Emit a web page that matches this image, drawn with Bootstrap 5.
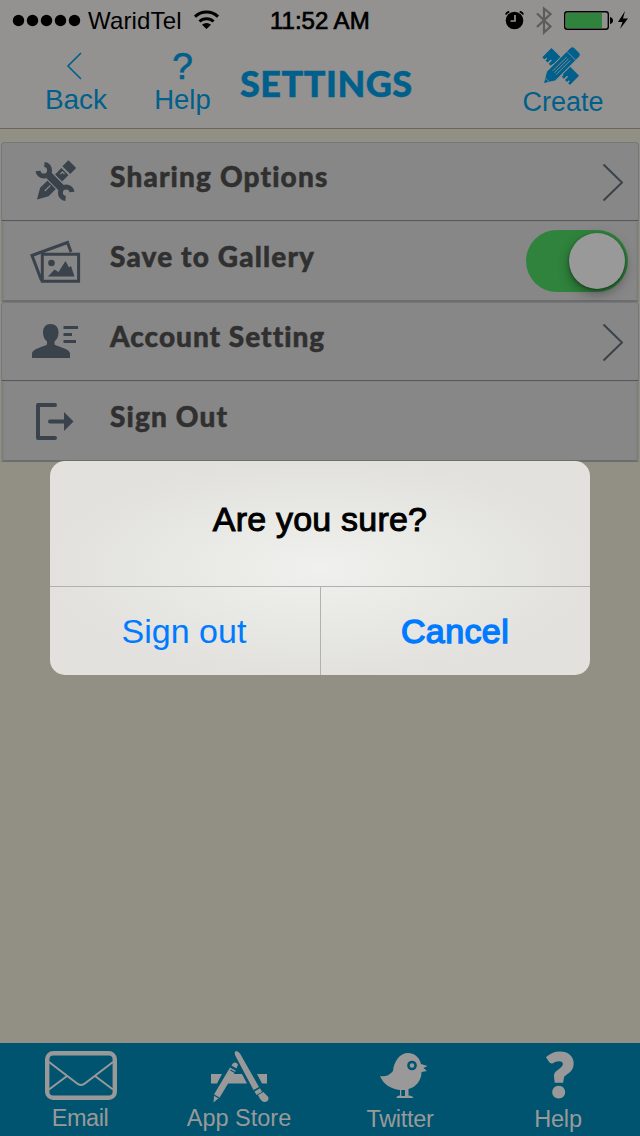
<!DOCTYPE html>
<html lang="en">
<head>
<meta charset="utf-8">
<meta name="viewport" content="width=device-width, initial-scale=1">
<title>Settings</title>
<link rel="stylesheet" href="https://cdn.jsdelivr.net/npm/bootstrap@5.3.0/dist/css/bootstrap.min.css">
<style>
  body { width: 640px; height: 1136px; background: #929084; font-family: "Liberation Sans", sans-serif; overflow: hidden; }
  svg { display: block; flex: none; }
  .app-top { height: 129px; background: #949290; border-bottom: 1px solid #6b665d; }
  .status-bar { height: 40px; color: #000; font-size: 24px; line-height: 40px; padding-left: 12px; }
  .carrier { width: 93px; margin-left: 7px; letter-spacing: .15px; white-space: nowrap; padding-top: 1px; }
  .clock { width: 100px; margin-left: 50px; letter-spacing: 0; -webkit-text-stroke: .7px #000; white-space: nowrap; padding-top: 1px; }
  .title-row { height: 88px; color: #005f8b; padding-left: 40px; }
  .nav-btn { color: inherit; text-decoration: none; font-size: 28px; line-height: 32px; white-space: nowrap; }
  .glyph-box { height: 44px; }
  .help-mark { font-size: 37px; line-height: 43px; padding-top: 5px; -webkit-text-stroke: .7px; }
  .title-text { width: 180px; margin: 0 0 0 25px; font: 900 36px/44px Lato, sans-serif; white-space: nowrap; padding-top: 21px; letter-spacing: .5px; -webkit-text-stroke: .5px; }
  .settings { margin: 13px 1px 0; }
  .settings .list-group-item { height: 79px; background: #878787; border: 1px solid #76777a; border-bottom-color: #585858; padding: 0 0 0 28px; color: #303030; border-radius: 0; }
  .settings .list-group-item.top-item { border-radius: 4px 4px 0 0; }
  .settings .list-group-item.end-item { height: 81px; border-width: 1px 3px 2px; border-color: #838383 #80807c #6d6d6d; padding-left: 26px; padding-right: 0; }
  .settings svg { color: #3a424b; }
  .row-label { font: 900 28px/40px Lato, sans-serif; letter-spacing: 1.15px; -webkit-text-stroke: .5px; margin-left: 28px; padding-bottom: 11px; white-space: nowrap; }
  .toggle { width: 102px; height: 62px; border-radius: 31px; background: #2f833c; padding: 3px; margin-right: 8px; }
  .knob { width: 56px; height: 56px; border-radius: 50%; background: #999; box-shadow: 0 5px 12px rgba(0,0,0,.35), 0 1px 3px rgba(0,0,0,.4); }
  .alert-box { left: 50px; top: 461px; width: 540px; height: 214px; border-radius: 15px; background: radial-gradient(ellipse 270px 107px at 50% 50%, #f0f0ee, #e7e7e3 60%, #e2e1de); color: #000; z-index: 5; overflow: hidden; }
  .alert-title { height: 125px; font-size: 34px; line-height: 117px; letter-spacing: .2px; -webkit-text-stroke: 1px #000; }
  .alert-actions { height: 89px; border-top: 1px solid #b2b1af; }
  .alert-btn { color: #007aff; background: transparent; border: 0; font-size: 34px; line-height: 88px; padding: 0; }
  .alert-btn:first-child { padding-right: 2px; }
  .alert-btn + .alert-btn { border-left: 1px solid #b2b1af; letter-spacing: .4px; padding-right: 1px; -webkit-text-stroke: 1.4px #007aff; }
  .tab-bar { height: 93px; background: #005470; color: #999; }
  .tab-link { color: #999; text-decoration: none; font-size: 23.5px; line-height: 28px; white-space: nowrap; }
  .tab-link .art { height: 61px; }
  .big-mark { font: 900 61px/61px Lato, sans-serif; padding-left: 4px; -webkit-text-stroke: 3px #999; }
</style>
</head>
<body class="d-flex flex-column position-relative">
<header class="app-top">
  <div class="status-bar d-flex align-items-center">
    <svg width="69" height="40"><g><circle cx="6.500" cy="20.500" r="5.700"/><circle cx="20.500" cy="20.500" r="5.700"/><circle cx="34.500" cy="20.500" r="5.700"/><circle cx="48.500" cy="20.500" r="5.700"/><circle cx="62.500" cy="20.500" r="5.700"/></g></svg>
    <span class="carrier">WaridTel</span>
    <svg width="26" height="40" viewBox="194 0 26 40" style="margin-left:13px"><g fill="none" stroke="#000" stroke-width="3"><path d="M195 16.700a16.500 16.500 0 0 1 23 0M199.500 21.500a10 10 0 0 1 14 0"/></g><path d="M202 24.700a6.600 6.600 0 0 1 9 0L206.500 29z"/></svg>
    <span class="clock">11:52 AM</span>
    <svg width="140" height="40" viewBox="500 0 140 40" class="ms-auto">
      <circle cx="514.500" cy="20.500" r="8.800"/><path d="M505.800 14.500q.7-2 3.500-2.800M519.700 11.700q2.800.8 3.500 2.800" fill="none" stroke="#000" stroke-width="1.800"/><path d="M515 15v6h-4.500" fill="none" stroke="#949290" stroke-width="1.700"/>
      <path d="M537 13.500l13.500 13-6.500 6V8.500l6.500 5.500L537 27" fill="none" stroke="#5d5c5a" stroke-width="2.200"/>
      <rect x="564.700" y="11.700" width="43.600" height="17.600" rx="2.500" fill="none" stroke="#000" stroke-width="1.400"/><path d="M566 13h36v15h-36z" fill="#2f833c"/><path d="M610 17q3 1 3 3.500t-3 3.500z"/>
      <path d="M625 11l-7 11h4.500l-2.500 7 8-10.500h-5z"/>
    </svg>
  </div>
  <nav class="title-row d-flex">
    <a href="#" class="nav-btn text-center" style="width:72px"><div class="glyph-box"><svg width="72" height="43" viewBox="40 40 72 43"><path d="M81 53L68 66l13 13" fill="none" stroke="#005f8b" stroke-width="1.600"/></svg></div>Back</a>
    <a href="#" class="nav-btn text-center" style="width:65px;margin-left:38px;font-size:27.500px"><div class="glyph-box help-mark">?</div>Help</a>
    <h1 class="title-text">SETTINGS</h1>
    <a href="#" class="nav-btn text-center" style="width:92px;margin-left:97px;font-size:27px"><div class="glyph-box" style="height:46px"><svg width="92" height="45" viewBox="517 40 92 45">
      <g transform="translate(560.700 66.500)" fill="#005f8b">
        <path transform="rotate(45)" d="M-19.500-6.500h39v13h-2.500V4h-1.500v2.500h-3V2h-1.500v4.500h-3V4h-1.500v2.500H-6V4h-1.500v2.500h-3V2h-1.500v4.500h-3V4h-1.500v2.500h-3z"/>
        <path transform="rotate(-45)" d="M-24.500 0L-13.500-6.500H20q3 0 3 3v7q0 3-3 3h-33.500z" stroke="#949290" stroke-width="1"/>
        <path transform="rotate(-45)" d="M15-6v12M-9-2.500h20M-9 0h20M-9 2.500h20M-19-3v6" stroke="#949290" stroke-width=".8" fill="none"/>
      </g></svg></div>Create</a>
  </nav>
</header>

<main class="flex-grow-1">
  <ul class="list-group settings">
    <li class="list-group-item top-item d-flex align-items-center">
      <svg width="52" height="54" viewBox="30 155 52 54"><g transform="translate(55 181.500)">
        <g transform="rotate(-45)" fill="currentColor"><path d="M-25.500 0L-15-6H-3V6h-12zM5-5h9V5H5zM16-5.500h8.500v11H16z"/><path d="M-14-.5h8M9-1.500h3v3" fill="none" stroke="#878787" stroke-width="1.200"/></g>
        <g transform="rotate(45)" fill="none"><path d="M-9 0H9" stroke="#878787" stroke-width="9.500"/><path d="M-11 0h22" stroke="currentColor" stroke-width="7.500"/><path d="M-19.500-4.500A5.800 5.800 0 1 1-19.500 4.500M19.500-4.500A5.800 5.800 0 1 0 19.500 4.500" stroke="currentColor" stroke-width="5"/></g>
      </g></svg>
      <span class="row-label">Sharing Options</span>
      <svg class="ms-auto" width="38" height="54" viewBox="600 155 38 54"><path d="M603.500 164.500L622 182.500l-18.500 18" fill="none" stroke="#3a424b" stroke-width="2"/></svg>
    </li>
    <li class="list-group-item end-item d-flex align-items-center">
      <svg width="52" height="54" viewBox="30 234 52 54"><path fill="none" stroke="currentColor" stroke-width="3" d="M42.300 254.300h36.300v27H42.300zM71 252l-3.500-9.500-35.500 13 9.500 25"/><circle cx="51.500" cy="263" r="3.300" fill="currentColor"/><path fill="currentColor" d="M48 276.500l6.500-7 4 2.500 7-11 3.500 6.500 2-1.500 3.500 10.500z"/></svg>
      <span class="row-label">Save to Gallery</span>
      <div class="toggle ms-auto d-flex justify-content-end"><div class="knob"></div></div>
    </li>
    <li class="list-group-item top-item d-flex align-items-center">
      <svg width="52" height="54" viewBox="30 315 52 54"><path fill="currentColor" d="M50.500 324c5 0 8 3 8 8.500 0 4-1.500 7-4 9v3c4 2.500 15.500 4.500 15.500 9V358H32v-4.500c0-4.500 11-6.500 15-9v-3c-2.500-2-4-5-4-9 0-5.500 3-8.500 7.500-8.500z"/><path d="M63.500 327.500H78M63.500 334.500H72M63.500 341.500H76" stroke="currentColor" stroke-width="2.800"/></svg>
      <span class="row-label" style="letter-spacing:1px">Account Setting</span>
      <svg class="ms-auto" width="38" height="54" viewBox="600 315 38 54"><path d="M603.500 324.500L622 342.500l-18.500 18" fill="none" stroke="#3a424b" stroke-width="2"/></svg>
    </li>
    <li class="list-group-item end-item d-flex align-items-center">
      <svg width="52" height="54" viewBox="30 394 52 54"><path d="M55 405H38v33h17" fill="none" stroke="currentColor" stroke-width="4" stroke-linecap="round" stroke-linejoin="round"/><path d="M50 421.500h15" stroke="currentColor" stroke-width="4" stroke-linecap="round"/><path fill="currentColor" d="M64 412l9.500 9.500L64 431z"/></svg>
      <span class="row-label">Sign Out</span>
    </li>
  </ul>
</main>

<section class="alert-box position-absolute" role="alertdialog">
  <div class="alert-title text-center">Are you sure?</div>
  <div class="alert-actions d-flex">
    <button class="alert-btn w-50">Sign out</button>
    <button class="alert-btn w-50">Cancel</button>
  </div>
</section>

<footer class="tab-bar row g-0">
  <a href="#" class="tab-link col-3 text-center" style="letter-spacing:-.5px"><div class="art"><svg width="160" height="61" viewBox="0 1043 160 61" fill="none" stroke="#999"><rect x="47.200" y="1053.200" width="67.600" height="44.600" rx="6" stroke-width="4.400"/><path stroke-width="2" d="M49 1062l27.500 21q4.500 4 9 0l27.500-21M49 1089.500l18-13.500M113 1089.500L95 1076"/></svg></div>Email</a>
  <a href="#" class="tab-link col-3 text-center" style="padding-right:2px"><div class="art"><svg width="160" height="61" viewBox="160 1043 160 61" fill="#999"><path d="M211 1074h11l-5 9.500h-6zM232 1074h10l5 9.500h-20zM257 1074h10v9.500h-5z"/>
    <path d="M230 1067.500l5.800 3.300-16 26.500-6.300 5.200.8-8.500zM231.500 1065.500l1.500-2.200q3-2 5 1.300l-1.500 4z"/><path d="M214 1095l5 3M230.500 1070l4.500 2.500" stroke="#005470" stroke-width="1.300"/>
    <path d="M235.500 1051q3 0 4.500 2.500l19 33.500-5.500 3-18-34q-1.500-3 0-5zM254.500 1091.500l5.500-3.200 2 3.500-5.500 3.200zM258 1095l5.300-3 5 5q1 5-4 5-3.500-.5-6.300-7z"/></svg></div>App Store</a>
  <a href="#" class="tab-link col-3 text-center" style="letter-spacing:-.3px;line-height:30px"><div class="art"><svg width="160" height="61" viewBox="320 1043 160 61" fill="#999"><path d="M380 1076q8 1.500 13-5c1-10 7-18 15-18 6 0 11 3.500 13 11l6.500 2-4 2 3.500 3-5.500 1c0 8-5 15-13 17v6.500q4 0 5 2.500h-17q0-2.500 3.500-2.500V1090C391 1089 383 1084 380 1076z"/><path d="M401.300 1090h3.700v6h-3.700z" fill="#005470"/><circle cx="412" cy="1065.500" r="3.600" stroke="#005470" stroke-width="2.500"/></svg></div>Twitter</a>
  <a href="#" class="tab-link col-3 text-center" style="padding-right:4px;letter-spacing:-.2px;line-height:30px"><div class="art big-mark">?</div>Help</a>
</footer>
<script src="https://cdn.jsdelivr.net/npm/bootstrap@5.3.0/dist/js/bootstrap.bundle.min.js"></script>
</body>
</html>
